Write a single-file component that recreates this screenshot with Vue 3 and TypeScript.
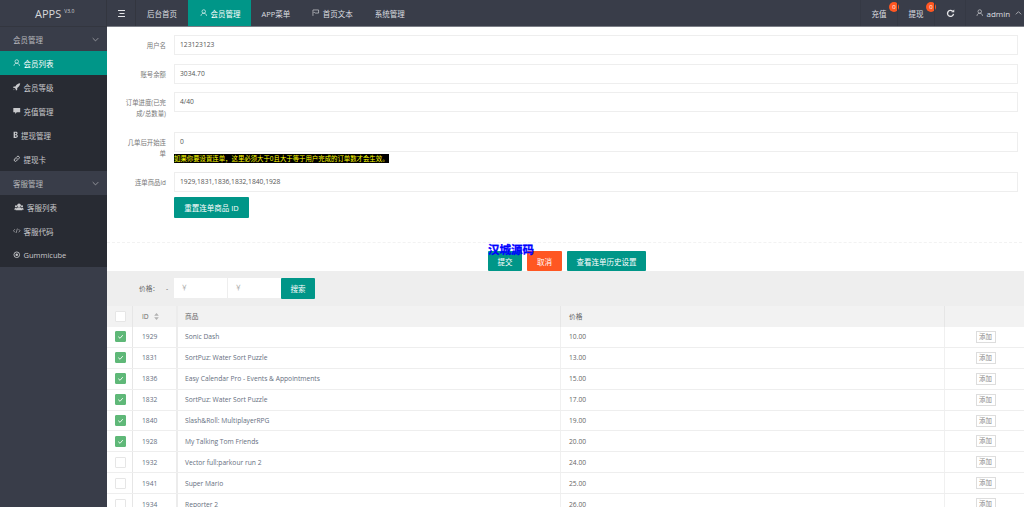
<script setup lang="ts">
type MemberRow = { id: number; name: string; price: string; checked: boolean }

const rows: MemberRow[] = [
  { id: 1929, name: "Sonic Dash", price: "10.00", checked: true },
  { id: 1831, name: "SortPuz: Water Sort Puzzle", price: "13.00", checked: true },
  { id: 1836, name: "Easy Calendar Pro - Events & Appointments", price: "15.00", checked: true },
  { id: 1832, name: "SortPuz: Water Sort Puzzle", price: "17.00", checked: true },
  { id: 1840, name: "Slash&Roll: MultiplayerRPG", price: "19.00", checked: true },
  { id: 1928, name: "My Talking Tom Friends", price: "20.00", checked: true },
  { id: 1932, name: "Vector full:parkour run 2", price: "24.00", checked: false },
  { id: 1941, name: "Super Mario", price: "25.00", checked: false },
  { id: 1934, name: "Reporter 2", price: "26.00", checked: false },
]

const fields = [
  { label: "用户名", value: "123123123", tall: false },
  { label: "账号余额", value: "3034.70", tall: false },
  { label: "订单进度(已完成/总数量)", value: "4/40", tall: true },
]
</script>

<template>
  <div class="app">
    <div class="logo">APPS<sup>V3.0</sup></div>

    <header class="topbar">
      <div class="nav-toggle">
        <svg width="7" height="7" viewBox="0 0 7 7"><path d="M0 .5h7M1.500 3.500h5M0 6.500h7" stroke="#e4e5e8" stroke-width="1" fill="none" /></svg>
      </div>
      <a class="nav-item">后台首页</a>
      <a class="nav-item active">
        <svg class="ico" viewBox="0 0 12 12"><circle cx="6" cy="4" r="2.800" fill="none" stroke="currentColor" /><path d="M1.500 11c.5-3 2-4.200 4.500-4.200s4 1.200 4.500 4.200" fill="none" stroke="currentColor" /></svg>
        会员管理
      </a>
      <a class="nav-item">APP菜单</a>
      <a class="nav-item">
        <svg class="ico" viewBox="0 0 12 12"><path d="M1.500 11V1.500h9v5H5l-.8-1H2.500" fill="none" stroke="currentColor" /></svg>
        首页文本
      </a>
      <a class="nav-item">系统管理</a>

      <div class="top-right">
        <a class="tool">充值<span class="badge">0</span></a>
        <a class="tool">提现<span class="badge">0</span></a>
        <a class="tool refresh">
          <svg width="9" height="9" viewBox="0 0 12 12"><path d="M10 6.500A4 4 0 1 1 8.800 3" fill="none" stroke="#e4e5e8" stroke-width="1.800" /><path d="M7 4.200h4V.5z" fill="#e4e5e8" /></svg>
        </a>
        <a class="tool user">
          <svg class="ico" viewBox="0 0 12 12"><circle cx="6" cy="4" r="2.800" fill="none" stroke="currentColor" /><path d="M1.500 11c.5-3 2-4.200 4.500-4.200s4 1.200 4.500 4.200" fill="none" stroke="currentColor" /></svg>
          admin
          <svg class="chev" viewBox="0 0 10 6"><path d="M1 5l4-4 4 4" fill="none" stroke="currentColor" /></svg>
        </a>
      </div>
    </header>

    <aside class="side">
      <div class="group">会员管理<svg class="chev-down" viewBox="0 0 10 6"><path d="M1 1l4 4 4-4" fill="none" stroke="currentColor" /></svg></div>
      <div class="children">
        <a class="leaf selected">
          <svg class="ico" viewBox="0 0 12 12"><circle cx="6" cy="4" r="2.800" fill="none" stroke="currentColor" /><path d="M1.500 11c.5-3 2-4.200 4.500-4.200s4 1.200 4.500 4.200" fill="none" stroke="currentColor" /></svg>
          会员列表
        </a>
        <a class="leaf">
          <svg class="ico" viewBox="0 0 12 12"><path d="M11.500.5C8 .8 5.500 2.500 3.800 5.500H1L0 7.500l2.800.4 1.500 1.500.4 2.600 2-1V8c2.800-1.800 4.500-4.200 4.800-7.500zM1.500 9.500L.5 11.500l2-1z" fill="currentColor" /></svg>
          会员等级
        </a>
        <a class="leaf">
          <svg class="ico" viewBox="0 0 12 12"><path d="M.5 1.500h11v7H6L3.500 11V8.500H.5z" fill="currentColor" /></svg>
          充值管理
        </a>
        <a class="leaf">
          <svg class="ico narrow" viewBox="0 0 8 12"><path fill-rule="evenodd" d="M1 1h3.800c3 0 3.400 3.400 1.300 4.600 2.400.9 2.200 5.400-1.300 5.400H1zm2.200 1.800v2.400h1.300c1.300 0 1.300-2.400 0-2.400zm0 4v2.400h1.600c1.500 0 1.500-2.400 0-2.400z" fill="currentColor" /></svg>
          提现管理
        </a>
        <a class="leaf">
          <svg class="ico" viewBox="0 0 12 12"><path d="M5 7l2-2M4.500 4.500l2-2a2.100 2.100 0 0 1 3 3l-2 2M7.500 7.500l-2 2a2.100 2.100 0 0 1-3-3l2-2" fill="none" stroke="currentColor" stroke-width="1.500" /></svg>
          提现卡
        </a>
      </div>
      <div class="group">客服管理<svg class="chev-down" viewBox="0 0 10 6"><path d="M1 1l4 4 4-4" fill="none" stroke="currentColor" /></svg></div>
      <div class="children">
        <a class="leaf wide">
          <svg class="ico users" viewBox="0 0 14 12"><circle cx="7" cy="3.500" r="2.800" fill="currentColor" /><path d="M2 11c0-3 2-4.800 5-4.800s5 1.800 5 4.800z" fill="currentColor" /><circle cx="2.500" cy="5" r="1.600" fill="currentColor" /><circle cx="11.500" cy="5" r="1.600" fill="currentColor" /><path d="M0 10c0-2 1-3 2.500-3v3zM14 10c0-2-1-3-2.500-3v3z" fill="currentColor" /></svg>
          客服列表
        </a>
        <a class="leaf">
          <svg class="ico" viewBox="0 0 12 12"><path d="M3 3.500L.8 6 3 8.500M9 3.500L11.200 6 9 8.500M7 2.500L5 9.500" fill="none" stroke="currentColor" /></svg>
          客服代码
        </a>
        <a class="leaf">
          <svg class="ico" viewBox="0 0 12 12"><circle cx="6" cy="6" r="4.500" fill="none" stroke="currentColor" stroke-width="1.400" /><circle cx="6" cy="6" r="2" fill="currentColor" /></svg>
          Gummicube
        </a>
      </div>
    </aside>

    <main class="main">
      <form class="form" @submit.prevent>
        <div v-for="f in fields" :key="f.label" class="field" :class="{ tall: f.tall }">
          <label>{{ f.label }}</label>
          <div class="control"><div class="input">{{ f.value }}</div></div>
        </div>
        <div class="field hinted">
          <label>几单后开始连单</label>
          <div class="control">
            <div class="input">0</div>
            <span class="hint">如果你要设置连单，这里必须大于0且大于等于用户完成的订单数才会生效。</span>
          </div>
        </div>
        <div class="field last">
          <label>连单商品id</label>
          <div class="control">
            <div class="input">1929,1831,1836,1832,1840,1928</div>
            <button type="button" class="btn reset">重置连单商品 ID</button>
          </div>
        </div>
        <div class="actions">
          <span class="watermark">汉城源码</span>
          <button type="button" class="btn">提交</button>
          <button type="button" class="btn danger">取消</button>
          <button type="button" class="btn">查看连单历史设置</button>
        </div>
      </form>

      <div class="search">
        <span class="search-label">价格：</span>
        <span class="dash">-</span>
        <div class="price">￥</div>
        <div class="price">￥</div>
        <button type="button" class="btn find">搜索</button>
      </div>

      <div class="table">
        <div class="tr head">
          <div class="td c-check"><span class="box"></span></div>
          <div class="td c-id">ID
            <svg class="sort" viewBox="0 0 6 9"><path d="M3 0l3 3.500H0zM3 9L0 5.500h6z" fill="#b2b2b2" /></svg>
          </div>
          <div class="td c-name">商品</div>
          <div class="td c-price">价格</div>
          <div class="td c-add"></div>
        </div>
        <div v-for="r in rows" :key="r.id" class="tr">
          <div class="td c-check">
            <span class="box" :class="{ on: r.checked }">
              <svg v-if="r.checked" viewBox="0 0 10 10"><path d="M2.500 5.200l2 1.800 3-3.500" fill="none" stroke="#fff" /></svg>
            </span>
          </div>
          <div class="td c-id link">{{ r.id }}</div>
          <div class="td c-name link">{{ r.name }}</div>
          <div class="td c-price">{{ r.price }}</div>
          <div class="td c-add"><span class="add">添加</span></div>
        </div>
      </div>
    </main>
  </div>
</template>

<style scoped>
.app {
  display: grid;
  grid-template-columns: 107px 1fr;
  grid-template-rows: 27px 1fr;
  width: 1024px;
  height: 507px;
  overflow: hidden;
  font-family: "Open Sans", "Noto Sans CJK SC", sans-serif;
  font-size: 7.5px;
  color: #666;
  background: #fff;
}

.ico {
  width: 7.500px;
  height: 7.500px;
  flex: none;
}

.logo {
  display: flex;
  align-items: center;
  padding-left: 35px;
  background: #393d49;
  border-right: 1px solid #33363f;
  border-bottom: 1px solid #33363f;
  color: #d6d7da;
  font-size: 11px;
  box-sizing: border-box;
}
.logo sup {
  font-size: 5px;
  margin: -5px 0 0 3px;
}

.topbar {
  display: flex;
  background: #393d49;
  border-bottom: 1px solid #7b7e86;
  box-sizing: border-box;
  color: #dcdde0;
}
.nav-toggle {
  display: flex;
  align-items: center;
  justify-content: center;
  width: 29px;
  border-right: 1px solid #33363f;
  box-sizing: border-box;
}
.nav-item {
  display: flex;
  align-items: center;
  gap: 3px;
  padding: 0 11px;
  white-space: nowrap;
}
.nav-item.active {
  padding: 0 10px 0 12px;
  background: #009688;
  color: #fff;
}
.top-right {
  display: flex;
  margin-left: auto;
}
.tool {
  position: relative;
  display: flex;
  align-items: center;
  justify-content: center;
  width: 37px;
  border-left: 1px solid #353944;
  box-sizing: border-box;
}
.tool.refresh {
  width: 31px;
}
.tool.user {
  justify-content: flex-start;
  width: 59px;
  padding-left: 10px;
  gap: 3px;
  font-size: 8px;
}
.badge {
  position: absolute;
  top: 2px;
  right: -2px;
  width: 10px;
  height: 10px;
  border-radius: 50%;
  background: #ff5722;
  color: #fff;
  font-size: 6px;
  line-height: 10px;
  text-align: center;
}
.chev {
  width: 7px;
  height: 4px;
  margin-left: 2px;
}

.side {
  background: #393d49;
  color: #c8c9cc;
}
.group {
  display: flex;
  align-items: center;
  justify-content: space-between;
  height: 24px;
  padding: 0 8px 0 13px;
  color: #b7b8bc;
}
.chev-down {
  width: 7px;
  height: 5px;
}
.children {
  background: #282b33;
}
.leaf {
  display: flex;
  align-items: center;
  gap: 3px;
  height: 24px;
  padding-left: 13px;
}
.leaf.selected {
  background: #009688;
  color: #fff;
}
.ico.narrow {
  width: 5px;
}
.ico.users {
  width: 10px;
  height: 8px;
}
.leaf.wide {
  padding-left: 14px;
}

.main {
  min-width: 0;
}
.form {
  padding: 8px 6px 0 0;
}
.field {
  display: flex;
  margin-bottom: 8.500px;
}
.field.tall {
  margin-bottom: 20px;
}
.field.hinted {
  margin-bottom: 9px;
}
.field label {
  width: 59px;
  padding: 5px 0 0 16px;
  box-sizing: border-box;
  text-align: right;
  font-size: 6.400px;
  line-height: 11px;
  color: #777;
  flex: none;
}
.field.tall label {
  height: 20px;
}
.control {
  flex: 1;
  margin-left: 8px;
}
.field.last .control {
  display: flex;
  flex-direction: column;
  align-items: flex-start;
  gap: 5px;
}
.input {
  width: 100%;
  height: 20px;
  padding-left: 5px;
  box-sizing: border-box;
  border: 1px solid #eee;
  font-size: 6.700px;
  line-height: 18px;
  color: #555;
}
.hint {
  display: block;
  width: fit-content;
  margin-top: 2px;
  background: #000;
  color: #ff0;
  font-size: 6.400px;
  line-height: 9px;
}
.btn {
  height: 21px;
  padding: 0 9.500px;
  border: 0;
  border-radius: 1px;
  background: #009688;
  color: #fff;
  font-family: inherit;
  font-size: 7.500px;
}
.btn.danger {
  padding: 0 10px;
  background: #ff5722;
}
.reset {
  width: 75px;
  padding: 0;
}
.actions {
  position: relative;
  display: flex;
  justify-content: center;
  gap: 5px;
  height: 29px;
  box-sizing: border-box;
  margin-top: 24px;
  margin-right: -4px;
  padding: 8px 0 0 5px;
  border-top: 1px dashed #f2f2f2;
}
.actions .btn {
  height: 20px;
}
.watermark {
  position: absolute;
  left: 381px;
  top: 0;
  color: #00f;
  font-size: 11.500px;
  font-weight: 700;
  line-height: 14px;
  -webkit-text-stroke: 0.3px #00f;
}
.search {
  display: flex;
  align-items: center;
  height: 34.500px;
  background: #eee;
  font-size: 6.700px;
}
.search-label {
  margin-left: 32px;
  width: 27px;
}
.dash {
  width: 8px;
}
.price {
  width: 53px;
  height: 20px;
  margin-right: 1px;
  padding-left: 7px;
  box-sizing: border-box;
  background: #fff;
  color: #aaa;
  line-height: 20px;
}
.find {
  margin-left: -1px;
  width: 34px;
  padding: 0;
}

.table {
  font-size: 6.700px;
}
.tr {
  display: flex;
  height: 20.900px;
  border-bottom: 1px solid #eee;
  box-sizing: border-box;
}
.tr.head {
  height: 21.500px;
  background: #f2f2f2;
  border-bottom: 0;
}
.td {
  display: flex;
  align-items: center;
  box-sizing: border-box;
  border-right: 1px solid #e6e6e6;
  padding-left: 8px;
}
.c-check {
  width: 26px;
}
.c-id {
  width: 45px;
  padding-left: 9px;
  gap: 5px;
  border-right: 2px solid #ececec;
}
.c-name {
  width: 383px;
  padding-left: 7px;
}
.c-price {
  width: 384px;
}
.c-add {
  flex: 1;
  justify-content: center;
  padding: 0 0 0 2px;
  border-right: 0;
}
.tr:not(.head) .c-name,
.tr:not(.head) .c-price {
  border-right-color: #f0f0f0;
}
.link {
  color: #666f80;
}
.sort {
  width: 5px;
  height: 7px;
}
.box {
  display: flex;
  width: 11px;
  height: 11px;
  border: 1px solid #e6e6e6;
  border-radius: 1px;
  box-sizing: border-box;
  background: #fff;
}
.box.on {
  border-color: #5fb878;
  background: #5fb878;
}
.add {
  width: 20px;
  height: 12px;
  border: 1px solid #ddd;
  box-sizing: border-box;
  text-align: center;
  font-size: 6.400px;
  line-height: 10px;
  color: #888;
}
</style>
